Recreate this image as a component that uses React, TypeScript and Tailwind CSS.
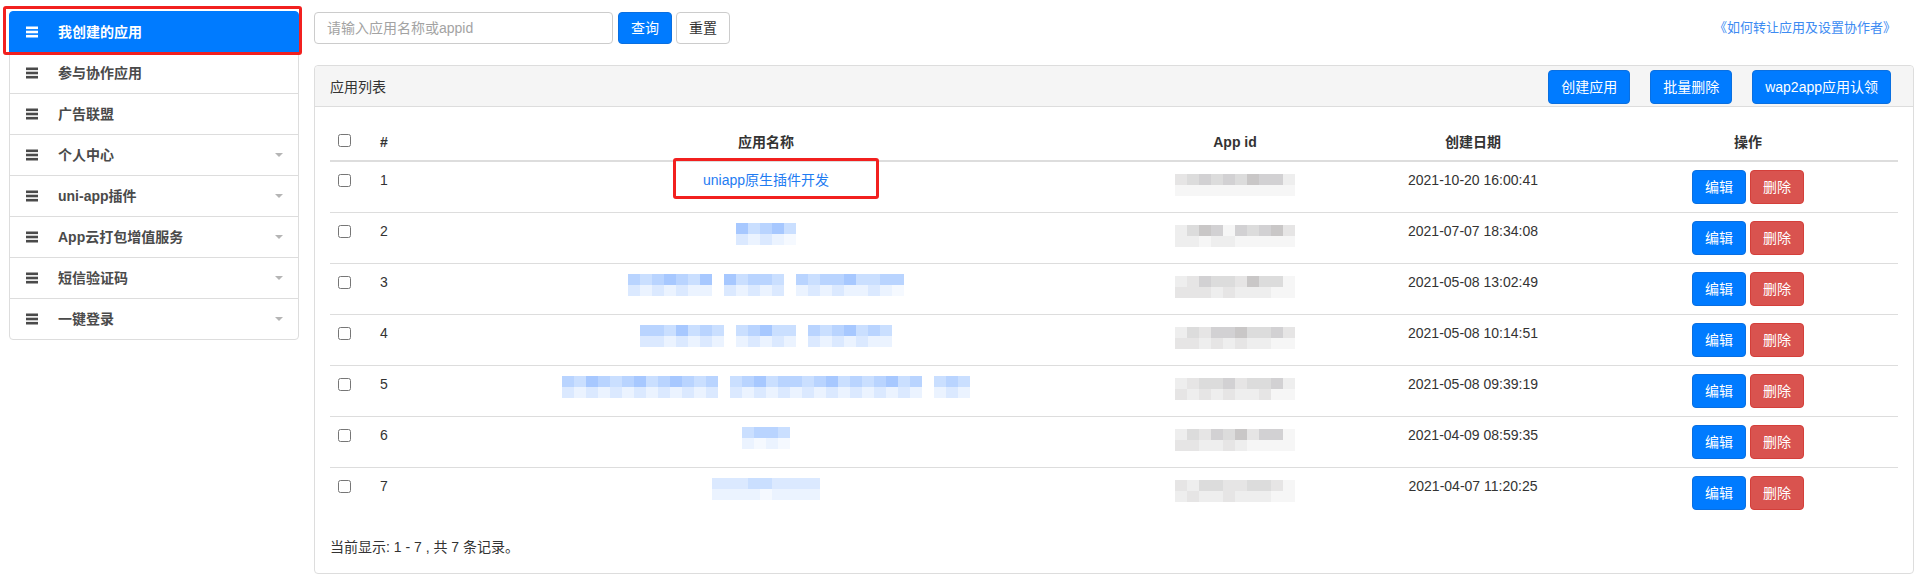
import React from "react";

const FONT = "font-['Liberation_Sans','Noto_Sans_CJK_SC',sans-serif]";

const BLUE = ["", "bg-[#a7c8ff]", "bg-[#b9d4ff]", "bg-[#cadfff]", "bg-[#dbe9ff]", "bg-[#ebf3ff]", "bg-[#f5f9ff]"];
const GRAY = ["", "bg-[#c9c7c7]", "bg-[#d2d1d3]", "bg-[#dcdcdc]", "bg-[#e6e5e5]", "bg-[#eeeeee]", "bg-[#f6f6f6]"];

const menu = [
  { label: "我创建的应用", active: true },
  { label: "参与协作应用" },
  { label: "广告联盟" },
  { label: "个人中心", caret: true },
  { label: "uni-app插件", caret: true },
  { label: "App云打包增值服务", caret: true },
  { label: "短信验证码", caret: true },
  { label: "一键登录", caret: true },
];

// blurred (mosaic) cells: each digit is one 12px square, 0 = empty
const rows = [
  { n: 1, date: "2021-10-20 16:00:41", name: null, id: ["4323231225", "6666666666"] },
  { n: 2, date: "2021-07-07 18:34:08", name: ["13213", "45456"], id: ["5312623214", "5565566666"] },
  {
    n: 3,
    date: "2021-05-08 13:02:49",
    name: ["23212310132230232213322", "45454550454540545455456"],
    id: ["5423341336", "4445455566"],
  },
  {
    n: 4,
    date: "2021-05-08 10:14:51",
    name: ["223132303213302321323", "445454505454504545455"],
    id: ["5342213324", "4454545566"],
  },
  {
    n: 5,
    date: "2021-05-08 09:39:19",
    name: ["2312321321232032132232132321320323", "4545454545454045454545454545450545"],
    id: ["5433243325", "4545455466"],
  },
  { n: 6, date: "2021-04-09 08:59:35", name: ["3223", "5656"], id: ["5342314226", "4455456666"] },
  { n: 7, date: "2021-04-07 11:20:25", name: ["444334444", "555565555"], id: ["4533443346", "5455455566"] },
];

function Pix({ top, bottom, pal, mt }: { top: string; bottom: string; pal: string[]; mt: string }) {
  return (
    <div className={`flex flex-col ${mt}`}>
      {[top, bottom].map((r, i) => (
        <div key={i} className="flex">
          {r.split("").map((c, j) => (
            <span key={j} className={`block w-[12px] h-[11px] ${pal[Number(c)]}`} />
          ))}
        </div>
      ))}
    </div>
  );
}

function Burger() {
  return (
    <svg width="12" height="12" viewBox="0 0 12 12" fill="currentColor">
      <rect x="0" y="0.5" width="12" height="2.6" />
      <rect x="0" y="4.7" width="12" height="2.6" />
      <rect x="0" y="8.9" width="12" height="2.6" />
    </svg>
  );
}

function Sidebar() {
  return (
    <div className="w-[290px] shrink-0 pt-[11px]">
      {menu.map((m, i) => (
        <div
          key={m.label}
          className={`relative flex items-center h-[42px] -mb-px border pl-[16px] pr-[15px] text-[14px] font-bold ${
            i === 0 ? "rounded-t-[4px]" : ""
          } ${i === menu.length - 1 ? "rounded-b-[4px]" : ""} ${
            m.active ? "z-10 bg-[#007bff] border-[#007bff] text-white" : "bg-white border-[#ddd] text-[#4a4a4a]"
          }`}
        >
          <Burger />
          <span className="ml-[20px] flex-1">{m.label}</span>
          {m.caret && (
            <span className="block w-0 h-0 border-x-[4px] border-x-transparent border-t-[4px] border-t-[#b5b5b5]" />
          )}
          {m.active && (
            <span className="absolute left-[-7px] top-[-6px] right-[-4px] bottom-[-3px] border-[3px] border-[#f2201f] rounded-[3px]" />
          )}
        </div>
      ))}
    </div>
  );
}

function Btn({ children, danger }: { children: React.ReactNode; danger?: boolean }) {
  return (
    <button
      className={`inline-flex items-center justify-center h-[34px] px-[12px] rounded-[4px] border text-[14px] text-white ${
        danger ? "bg-[#d9534f] border-[#d43f3a]" : "bg-[#007bff] border-[#0a6fe0]"
      }`}
    >
      {children}
    </button>
  );
}

export default function App() {
  return (
    <div className={`${FONT} flex w-[1914px] h-[582px] bg-white pl-[9px] pr-[3px] text-[#333] text-[14px]`}>
      <Sidebar />
      <div className="flex-1 ml-[15px] pt-[12px]">
        <div className="flex items-center h-[32px] mb-[21px]">
          <input
            className="w-[299px] h-[32px] border border-[#ccc] rounded-[4px] px-[12px] text-[14px] outline-none placeholder:text-[#a3a3a3]"
            placeholder="请输入应用名称或appid"
          />
          <button className="ml-[5px] w-[54px] h-[32px] rounded-[4px] bg-[#007bff] border border-[#0a6fe0] text-white text-[14px]">
            查询
          </button>
          <button className="ml-[4px] w-[54px] h-[32px] rounded-[4px] bg-white border border-[#ccc] text-[#333] text-[14px]">
            重置
          </button>
          <a className="ml-auto mr-[18px] text-[13px] text-[#3d8bf2]">《如何转让应用及设置协作者》</a>
        </div>

        <div className="border border-[#ddd] rounded-[4px] bg-white">
          <div className="flex items-center h-[41px] pt-[3px] pb-[1px] pl-[15px] pr-[22px] bg-[#f5f5f5] border-b border-[#ddd] rounded-t-[4px]">
            <span className="flex-1">应用列表</span>
            <div className="flex gap-[20px]">
              <Btn>创建应用</Btn>
              <Btn>批量删除</Btn>
              <Btn>wap2app应用认领</Btn>
            </div>
          </div>

          <div className="px-[15px] pt-[17px] pb-[16px]">
            <table className="w-full table-fixed border-collapse">
              <colgroup>
                <col className="w-[42px]" />
                <col className="w-[38px]" />
                <col className="w-[712px]" />
                <col className="w-[226px]" />
                <col className="w-[250px]" />
                <col className="w-[300px]" />
              </colgroup>
              <thead>
                <tr className="border-b-2 border-[#ddd]">
                  <th className="p-[8px] leading-[20px] align-top">
                    <input type="checkbox" className="block m-0 mt-[2px] w-[13px] h-[13px]" />
                  </th>
                  <th className="p-[8px] leading-[20px] font-bold text-left">#</th>
                  <th className="p-[8px] leading-[20px] font-bold text-center">应用名称</th>
                  <th className="p-[8px] leading-[20px] font-bold text-center">App id</th>
                  <th className="p-[8px] leading-[20px] font-bold text-center">创建日期</th>
                  <th className="p-[8px] leading-[20px] font-bold text-center">操作</th>
                </tr>
              </thead>
              <tbody>
                {rows.map((r) => (
                  <tr key={r.n} className="border-t border-[#ddd]">
                    <td className="p-[8px] leading-[20px] align-top">
                      <input type="checkbox" className="block m-0 mt-[4px] w-[13px] h-[13px]" />
                    </td>
                    <td className="p-[8px] leading-[20px] align-top">{r.n}</td>
                    <td className="p-[8px] leading-[20px] align-top text-center">
                      {r.name ? (
                        <div className="flex justify-center">
                          <Pix top={r.name[0]} bottom={r.name[1]} pal={BLUE} mt="mt-[2px]" />
                        </div>
                      ) : (
                        <span className="relative inline-block text-[#1f7cf2]">
                          uniapp原生插件开发
                          <span className="absolute left-[-30px] right-[-50px] top-[-12px] bottom-[-9px] border-[3px] border-[#f2201f] rounded-[3px]" />
                        </span>
                      )}
                    </td>
                    <td className="p-[8px] leading-[20px] align-top">
                      <div className="flex justify-center">
                        <Pix top={r.id[0]} bottom={r.id[1]} pal={GRAY} mt="mt-[4px]" />
                      </div>
                    </td>
                    <td className="p-[8px] leading-[20px] align-top text-center">{r.date}</td>
                    <td className="p-[8px] leading-[20px] align-top">
                      <div className="flex justify-center gap-[4px]">
                        <Btn>编辑</Btn>
                        <Btn danger>删除</Btn>
                      </div>
                    </td>
                  </tr>
                ))}
              </tbody>
            </table>
            <div className="mt-[19px] leading-[20px]">当前显示: 1 - 7 , 共 7 条记录。</div>
          </div>
        </div>
      </div>
    </div>
  );
}
